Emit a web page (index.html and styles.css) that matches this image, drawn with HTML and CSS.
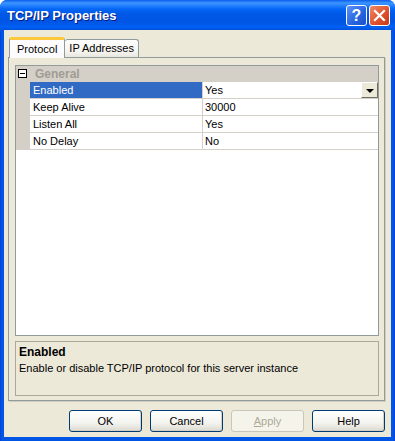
FILE: index.html
```html
<!DOCTYPE html>
<html lang="en">
<head>
  <meta charset="UTF-8">
  <title>TCP/IP Properties</title>
  <link rel="stylesheet" href="styles.css">
</head>
<body>
  <div class="window">
    <div class="titlebar">
      <span class="title">TCP/IP Properties</span>
      <div class="caption-buttons">
        <span class="cap help">?</span>
        <span class="cap close">
          <svg width="13" height="13" viewBox="0 0 13 13"><path d="M2 2 L11 11 M11 2 L2 11" stroke="#fff" stroke-width="2.2" stroke-linecap="square"/></svg>
        </span>
      </div>
    </div>

    <div class="client">
      <div class="tabs">
        <div class="tab active">Protocol</div>
        <div class="tab">IP Addresses</div>
      </div>

      <div class="tab-panel">
        <div class="grid">
          <div class="category">
            <span class="toggle"></span>
            <span class="category-label">General</span>
          </div>
          <div class="row selected">
            <div class="gutter"></div>
            <div class="name">Enabled</div>
            <div class="value">Yes<span class="drop"></span></div>
          </div>
          <div class="row">
            <div class="gutter"></div>
            <div class="name">Keep Alive</div>
            <div class="value">30000</div>
          </div>
          <div class="row">
            <div class="gutter"></div>
            <div class="name">Listen All</div>
            <div class="value">Yes</div>
          </div>
          <div class="row">
            <div class="gutter"></div>
            <div class="name">No Delay</div>
            <div class="value">No</div>
          </div>
        </div>

        <div class="desc">
          <div class="desc-title">Enabled</div>
          <div class="desc-text">Enable or disable TCP/IP protocol for this server instance</div>
        </div>
      </div>

      <div class="buttons">
        <button class="btn">OK</button>
        <button class="btn">Cancel</button>
        <button class="btn" disabled><u>A</u>pply</button>
        <button class="btn">Help</button>
      </div>
    </div>
  </div>
</body>
</html>
```

FILE: styles.css
```css
* {
  margin: 0;
  padding: 0;
  box-sizing: border-box;
}

body {
  background: #fff;
  font-family: 'Liberation Sans', Arial, sans-serif;
  font-size: 11px;
  color: #000;
}

.window {
  width: 395px;
  height: 441px;
  display: flex;
  flex-direction: column;
  background: linear-gradient(to right, #0831d9, #0055e5 1px, #0055e5 394px, #0831d9);
  border-radius: 7px 7px 0 0;
  overflow: hidden;
}

.titlebar {
  height: 30px;
  display: flex;
  align-items: center;
  justify-content: space-between;
  padding: 0 5px 0 7px;
  background: linear-gradient(to bottom, #0a5eeb 0, #3d95ff 3px, #2a85ff 5px, #0566f6 9px, #0058e6 14px, #0055e3 22px, #0061f5 27px, #0050d8 30px);
}

.title {
  color: #fff;
  font-weight: bold;
  font-size: 13px;
  text-shadow: 1px 1px 0 #0a1a80;
  margin-top: 1px;
}

.caption-buttons {
  display: flex;
  gap: 2px;
  margin-top: 1px;
}

.cap {
  width: 21px;
  height: 21px;
  border: 1px solid #fff;
  border-radius: 3px;
  display: flex;
  align-items: center;
  justify-content: center;
  color: #fff;
}

.help {
  background: linear-gradient(135deg, #5c94f8, #2663e0 60%, #1c50c8);
  font-size: 16px;
  font-weight: bold;
}

.close {
  background: linear-gradient(135deg, #f08a68, #e0522f 55%, #c63a18);
}

.client {
  flex: 1;
  margin: 0 4px 4px;
  background: #ece9d8;
  padding: 6px 6px 0 4px;
  display: flex;
  flex-direction: column;
}

.tabs {
  display: flex;
  align-items: flex-end;
  height: 21px;
  padding-left: 1px;
  position: relative;
  z-index: 1;
}

.tab {
  height: 18px;
  padding: 2px 4px 0;
  border: 1px solid #919b9c;
  border-bottom: none;
  border-radius: 3px 3px 0 0;
  background: linear-gradient(to bottom, #fefefe, #f4f3ee 70%, #e7e6df);
  margin-left: -1px;
}

.tab.active {
  height: 21px;
  padding: 3px 7px 0;
  background: #fcfcfe;
  border-top: 3px solid #ffc83c;
  margin-left: 0;
  margin-bottom: -1px;
  z-index: 2;
}

.tab.active + .tab {
  margin-left: 0;
  border-left: none;
}

.tab-panel {
  height: 344px;
  border: 1px solid #919b9c;
  box-shadow: 1px 1px 0 #d0cdbf;
  background: #ece9d8;
  padding: 7px 5px 4px 6px;
  display: flex;
  flex-direction: column;
  gap: 5px;
}

.grid {
  height: 271px;
  border: 1px solid #919b9c;
  background: #fff;
}

.category {
  height: 16px;
  background: #d4d0c8;
  display: flex;
  align-items: center;
  border-bottom: 1px solid #d4d0c8;
}

.toggle {
  width: 9px;
  height: 9px;
  border: 1px solid #000;
  margin: 0 8px 0 2px;
  position: relative;
  background: #fff;
}

.toggle::after {
  content: '';
  position: absolute;
  left: 1px;
  top: 3px;
  width: 5px;
  height: 1px;
  background: #000;
}

.category-label {
  color: #a09c94;
  font-weight: bold;
  font-size: 12px;
}

.row {
  display: grid;
  grid-template-columns: 14px 173px 1fr;
  height: 17px;
}

.gutter {
  background: #d4d0c8;
}

.name,
.value {
  border-bottom: 1px solid #d4d0c8;
  padding: 2px 0 0 3px;
  white-space: nowrap;
}

.name {
  border-right: 1px solid #d4d0c8;
}

.value {
  position: relative;
  padding-left: 2px;
}

.row.selected .name {
  background: #316ac5;
  color: #fff;
}

.drop {
  position: absolute;
  right: 0;
  top: 0;
  width: 17px;
  height: 16px;
  background: #ece9d8;
  border: 1px solid;
  border-color: #fff #716f64 #716f64 #fff;
}

.drop::after {
  content: '';
  position: absolute;
  left: 4px;
  top: 6px;
  border-left: 4px solid transparent;
  border-right: 4px solid transparent;
  border-top: 4px solid #000;
}

.desc {
  flex: 1;
  border: 1px solid #aca899;
  padding: 3px 3px 0;
}

.desc-title {
  font-weight: bold;
  font-size: 12px;
  margin-bottom: 3px;
}

.buttons {
  display: flex;
  justify-content: flex-end;
  gap: 8px;
  padding: 9px 0 0;
}

.btn {
  width: 73px;
  height: 22px;
  font-family: inherit;
  font-size: 11px;
  color: #000;
  border: 1px solid #003c74;
  border-radius: 3px;
  background: linear-gradient(to bottom, #fff, #f3f3ef 60%, #dcdad0);
  box-shadow: inset -1px -1px 0 #d6d0c5;
}

.btn:disabled {
  color: #aca899;
  border-color: #c9c7ba;
  background: #f5f4ea;
  box-shadow: none;
}
```
